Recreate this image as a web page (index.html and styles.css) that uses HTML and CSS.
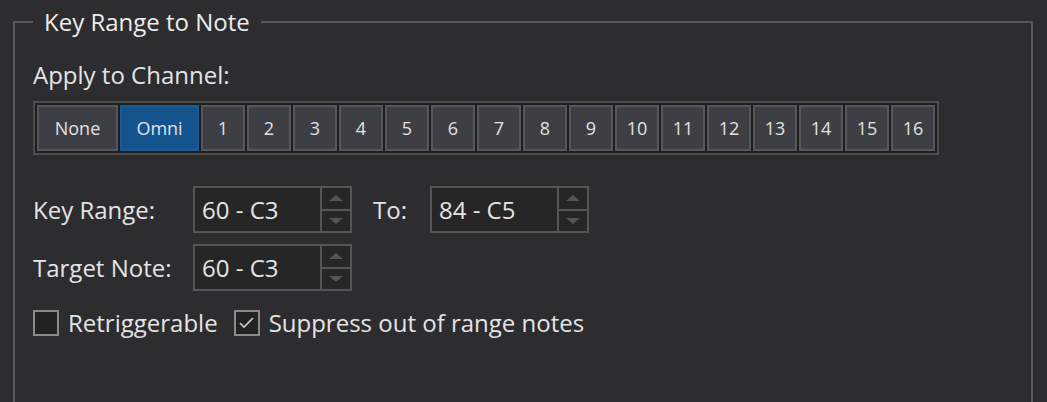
FILE: index.html
```html
<!DOCTYPE html>
<html lang="en">
<head>
  <meta charset="UTF-8">
  <title>Key Range to Note</title>
  <link rel="stylesheet" href="styles.css">
</head>
<body>

  <fieldset class="panel">
    <legend>Key Range to Note</legend>

    <div class="field-label">Apply to Channel:</div>
    <div class="channels">
      <button class="chan none">None</button>
      <button class="chan omni active">Omni</button>
      <button class="chan">1</button>
      <button class="chan">2</button>
      <button class="chan">3</button>
      <button class="chan">4</button>
      <button class="chan">5</button>
      <button class="chan">6</button>
      <button class="chan">7</button>
      <button class="chan">8</button>
      <button class="chan">9</button>
      <button class="chan">10</button>
      <button class="chan">11</button>
      <button class="chan">12</button>
      <button class="chan">13</button>
      <button class="chan">14</button>
      <button class="chan">15</button>
      <button class="chan">16</button>
    </div>

    <div class="row first">
      <span class="label">Key Range:</span>
      <div class="spin">
        <input type="text" value="60 - C3">
        <div class="spin-btns">
          <span><svg width="14" height="6" viewBox="0 0 14 6"><polygon points="7,0 14,6 0,6"/></svg></span>
          <span><svg width="14" height="6" viewBox="0 0 14 6"><polygon points="0,0 14,0 7,6"/></svg></span>
        </div>
      </div>
      <span class="to">To:</span>
      <div class="spin">
        <input type="text" value="84 - C5">
        <div class="spin-btns">
          <span><svg width="14" height="6" viewBox="0 0 14 6"><polygon points="7,0 14,6 0,6"/></svg></span>
          <span><svg width="14" height="6" viewBox="0 0 14 6"><polygon points="0,0 14,0 7,6"/></svg></span>
        </div>
      </div>
    </div>

    <div class="row">
      <span class="label">Target Note:</span>
      <div class="spin">
        <input type="text" value="60 - C3">
        <div class="spin-btns">
          <span><svg width="14" height="6" viewBox="0 0 14 6"><polygon points="7,0 14,6 0,6"/></svg></span>
          <span><svg width="14" height="6" viewBox="0 0 14 6"><polygon points="0,0 14,0 7,6"/></svg></span>
        </div>
      </div>
    </div>

    <div class="checks">
      <label class="check"><span class="box"></span>Retriggerable</label>
      <label class="check">
        <span class="box"><svg width="22" height="22" viewBox="0 0 22 22"><polyline points="4,11 8,15 17,6"/></svg></span>
        Suppress out of range notes
      </label>
    </div>
  </fieldset>

</body>
</html>
```

FILE: styles.css
```css
body {
  margin: 0;
  background-color: #2d2d30;
  color: #e4e4e4;
  font-family: "Open Sans", "Noto Sans", sans-serif;
  font-size: 24px;
  line-height: 32px;
  overflow: hidden;
}
.panel {
  margin: 6px 0 0 13px;
  width: 1020px;
  height: 398px;
  box-sizing: border-box;
  border: 2px solid #585858;
  border-bottom: 0;
  padding: 21px 18px 0;
}
legend {
  padding: 0 11px;
  color: #ececec;
}
.field-label {
  margin-bottom: 10px;
}
.channels {
  display: inline-flex;
  gap: 2px;
  padding: 2px;
  border: 2px solid #4e4e4e;
  background: #1f1f1f;
}
.chan {
  width: 44px;
  height: 46px;
  box-sizing: border-box;
  padding: 0;
  border: 2px solid #56575c;
  background: #3e3f45;
  color: #e2e2e2;
  font-family: "Open Sans", sans-serif;
  font-size: 18px;
}
.chan.none {
  width: 81px;
}
.chan.omni {
  width: 79px;
}
.chan.active {
  background: #13548f;
  border-color: #1b5a92;
}
.row {
  display: flex;
  align-items: center;
  margin-top: 11px;
}
.row.first {
  margin-top: 31px;
}
.label {
  width: 160px;
}
.spin {
  display: flex;
  width: 159px;
  height: 47px;
  box-sizing: border-box;
  border: 2px solid #555;
  background: #262626;
}
.spin input {
  flex: 1;
  min-width: 0;
  padding: 0 0 0 7px;
  border: 0;
  background: transparent;
  color: #e4e4e4;
  font: inherit;
  outline: none;
}
.spin-btns {
  width: 28px;
  display: flex;
  flex-direction: column;
  border-left: 2px solid #555;
}
.spin-btns span {
  flex: 1;
  display: flex;
  align-items: center;
  justify-content: center;
}
.spin-btns span + span {
  border-top: 2px solid #555;
}
.spin-btns polygon {
  fill: #555;
}
.to {
  margin: 0 23px 0 21px;
}
.checks {
  display: flex;
  align-items: center;
  margin-top: 16px;
}
.check {
  display: flex;
  align-items: center;
  gap: 9px;
  margin-right: 16px;
}
.box {
  width: 26px;
  height: 26px;
  box-sizing: border-box;
  border: 2px solid #8a8a8a;
  background: #232323;
}
.box svg {
  display: block;
}
.box polyline {
  fill: none;
  stroke: #d0d0d0;
  stroke-width: 1.6;
}
```
